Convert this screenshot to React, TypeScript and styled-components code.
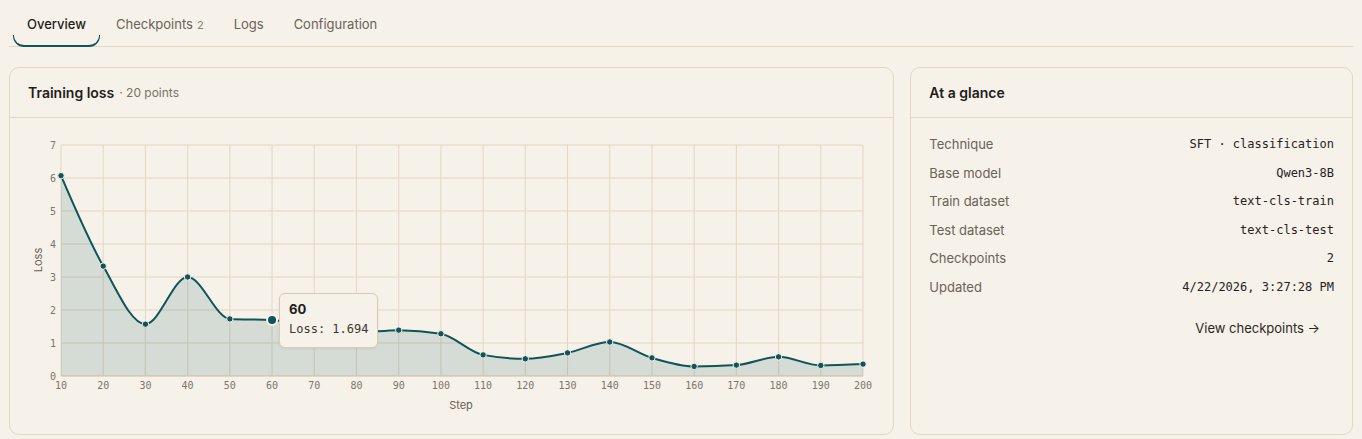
import React from "react";
import styled, { createGlobalStyle, css } from "styled-components";

const GlobalStyle = createGlobalStyle`
  html, body {
    margin: 0;
    padding: 0;
    background: #f6f1e9;
  }
  body {
    font-family: Inter, "Noto Sans", sans-serif;
    color: #1f1d1a;
    -webkit-font-smoothing: antialiased;
  }
  * { box-sizing: border-box; }
`;

const MONO = `"DejaVu Sans Mono", "Liberation Mono", monospace`;
const TEAL = "#0e5459";
const BG = "#f6f1e9";
const LINE = "#e3d7c3";

const Page = styled.div`
  padding: 0 9px;
`;

const TabBar = styled.nav`
  display: flex;
  gap: 2px;
  padding-left: 4px;
  border-bottom: 1px solid ${LINE};
`;

const Tab = styled.button<{ $active?: boolean }>`
  position: relative;
  appearance: none;
  background: none;
  border: 0;
  font-family: Inter, sans-serif;
  font-size: 13px;
  line-height: 18px;
  padding: 15px 14px 13px;
  margin-bottom: -1px;
  color: ${(p) => (p.$active ? "#1f1d1a" : "#6a6358")};
  font-weight: ${(p) => (p.$active ? 500 : 400)};
  cursor: pointer;
  display: flex;
  align-items: baseline;
  gap: 4px;

  ${(p) =>
    p.$active &&
    css`
      &::after {
        content: "";
        position: absolute;
        left: 0;
        right: 0;
        bottom: 0;
        height: 10px;
        border: 1px solid ${TEAL};
        border-top: 0;
        border-bottom-width: 2px;
        border-radius: 0 0 11px 11px;
      }
    `}
`;

const Count = styled.span`
  font-size: 11px;
  color: #8a8377;
`;

const Grid = styled.div`
  margin-top: 20px;
  display: grid;
  grid-template-columns: 2fr 1fr;
  gap: 16px;
`;

const Card = styled.section`
  border: 1px solid ${LINE};
  border-radius: 10px;
  background: ${BG};
  display: flex;
  flex-direction: column;
`;

const CardHeader = styled.header`
  height: 50px;
  padding: 0 18px;
  display: flex;
  align-items: center;
  gap: 5px;
  border-bottom: 1px solid ${LINE};
`;

const CardTitle = styled.h2`
  margin: 0;
  font-size: 14px;
  font-weight: 600;
  color: #1f1d1a;
`;

const CardMeta = styled.span`
  font-size: 12px;
  color: #7a7367;
`;

const ChartBody = styled.div`
  position: relative;
  height: 316px;
`;

const Tooltip = styled.div`
  position: absolute;
  left: 269px;
  top: 175px;
  height: 55px;
  padding: 7px 9px;
  border: 1px solid #d8cbb3;
  border-radius: 6px;
  background: ${BG};
  box-shadow: 0 1px 3px rgba(80, 60, 30, 0.08);
  display: flex;
  flex-direction: column;
  gap: 3px;
  white-space: nowrap;
`;

const TipTitle = styled.div`
  font-size: 13px;
  font-weight: 700;
  line-height: 17px;
  color: #1f1d1a;
`;

const TipValue = styled.div`
  font-family: ${MONO};
  font-size: 12px;
  line-height: 17px;
  color: #3b3833;
`;

const GlanceBody = styled.div`
  padding: 16px 18px 0;
  display: flex;
  flex-direction: column;
`;

const Facts = styled.dl`
  margin: 0;
  display: grid;
  grid-template-columns: auto 1fr;
  row-gap: 8.6px;
`;

const FactLabel = styled.dt`
  font-size: 13px;
  line-height: 20px;
  color: #6a6358;
`;

const FactValue = styled.dd`
  margin: 0;
  text-align: right;
  font-family: ${MONO};
  font-size: 12px;
  line-height: 20px;
  color: #26231f;
`;

const LinkRow = styled.div`
  display: flex;
  justify-content: flex-end;
  margin-top: 21px;
`;

const ViewLink = styled.a`
  font-size: 13px;
  line-height: 20px;
  color: #2b2824;
  padding: 0 14px;
  text-decoration: none;
  cursor: pointer;
`;

type Point = { step: number; loss: number };

const DATA: Point[] = [
  { step: 10, loss: 6.07 },
  { step: 20, loss: 3.33 },
  { step: 30, loss: 1.57 },
  { step: 40, loss: 3.0 },
  { step: 50, loss: 1.73 },
  { step: 60, loss: 1.694 },
  { step: 70, loss: 1.5 },
  { step: 80, loss: 1.32 },
  { step: 90, loss: 1.39 },
  { step: 100, loss: 1.28 },
  { step: 110, loss: 0.64 },
  { step: 120, loss: 0.52 },
  { step: 130, loss: 0.7 },
  { step: 140, loss: 1.03 },
  { step: 150, loss: 0.55 },
  { step: 160, loss: 0.29 },
  { step: 170, loss: 0.33 },
  { step: 180, loss: 0.58 },
  { step: 190, loss: 0.32 },
  { step: 200, loss: 0.36 },
];

const PLOT = { left: 51, right: 853, top: 27, bottom: 258 };
const Y_MAX = 7;

const sx = (i: number) =>
  PLOT.left + (i * (PLOT.right - PLOT.left)) / (DATA.length - 1);
const sy = (v: number) =>
  PLOT.bottom - (v / Y_MAX) * (PLOT.bottom - PLOT.top);

// Monotone cubic interpolation along x (same scheme as d3's curveMonotoneX)
function monotonePath(pts: [number, number][]): string {
  const n = pts.length;
  const sign = (x: number) => (x < 0 ? -1 : 1);
  const t: number[] = new Array(n).fill(0);
  for (let i = 1; i < n - 1; i++) {
    const h0 = pts[i][0] - pts[i - 1][0];
    const h1 = pts[i + 1][0] - pts[i][0];
    const s0 = (pts[i][1] - pts[i - 1][1]) / h0;
    const s1 = (pts[i + 1][1] - pts[i][1]) / h1;
    const p = (s0 * h1 + s1 * h0) / (h0 + h1);
    t[i] =
      (sign(s0) + sign(s1)) *
        Math.min(Math.abs(s0), Math.abs(s1), 0.5 * Math.abs(p)) || 0;
  }
  const h = pts[1][0] - pts[0][0];
  t[0] = (3 * (pts[1][1] - pts[0][1])) / h / 2 - t[1] / 2;
  const hl = pts[n - 1][0] - pts[n - 2][0];
  t[n - 1] = (3 * (pts[n - 1][1] - pts[n - 2][1])) / hl / 2 - t[n - 2] / 2;

  let d = `M${pts[0][0]},${pts[0][1]}`;
  for (let i = 0; i < n - 1; i++) {
    const [x0, y0] = pts[i];
    const [x1, y1] = pts[i + 1];
    const dx = (x1 - x0) / 3;
    d += `C${x0 + dx},${y0 + dx * t[i]},${x1 - dx},${y1 - dx * t[i + 1]},${x1},${y1}`;
  }
  return d;
}

const ACTIVE = 5;

function LossChart() {
  const pts: [number, number][] = DATA.map((d, i) => [sx(i), sy(d.loss)]);
  const line = monotonePath(pts);
  const area = `${line}L${PLOT.right},${PLOT.bottom}L${PLOT.left},${PLOT.bottom}Z`;
  const yTicks = [0, 1, 2, 3, 4, 5, 6, 7];

  return (
    <svg width="882" height="316" viewBox="0 0 882 316">
      {yTicks.map((v) => (
        <line
          key={`h${v}`}
          x1={PLOT.left}
          x2={PLOT.right}
          y1={sy(v)}
          y2={sy(v)}
          stroke={LINE}
          strokeWidth={1}
        />
      ))}
      {DATA.map((d, i) => (
        <line
          key={`v${d.step}`}
          x1={sx(i)}
          x2={sx(i)}
          y1={PLOT.top}
          y2={PLOT.bottom}
          stroke={LINE}
          strokeWidth={1}
        />
      ))}
      <path d={area} fill={TEAL} fillOpacity={0.14} />
      <line
        x1={PLOT.left}
        x2={PLOT.right}
        y1={PLOT.bottom}
        y2={PLOT.bottom}
        stroke="#d2c9b6"
        strokeWidth={1}
      />
      <path d={line} fill="none" stroke={TEAL} strokeWidth={2} />
      {pts.map(([x, y], i) =>
        i === ACTIVE ? null : (
          <circle key={i} cx={x} cy={y} r={3.2} fill={TEAL} stroke={BG} strokeWidth={1} />
        )
      )}
      <circle cx={pts[ACTIVE][0]} cy={pts[ACTIVE][1]} r={5} fill={TEAL} stroke={BG} strokeWidth={2} />

      {yTicks.map((v) => (
        <text
          key={`yl${v}`}
          x={PLOT.left - 5}
          y={sy(v) + 3.5}
          textAnchor="end"
          fontFamily={MONO}
          fontSize={10}
          fill="#7d766a"
        >
          {v}
        </text>
      ))}
      {DATA.map((d, i) => (
        <text
          key={`xl${d.step}`}
          x={sx(i)}
          y={PLOT.bottom + 13}
          textAnchor="middle"
          fontFamily={MONO}
          fontSize={10}
          fill="#7d766a"
        >
          {d.step}
        </text>
      ))}
      <text
        x={29}
        y={142}
        transform="rotate(-90 29 142)"
        textAnchor="middle"
        dominantBaseline="middle"
        fontFamily="Inter, sans-serif"
        fontSize={11}
        fill="#6a6358"
      >
        Loss
      </text>
      <text
        x={451}
        y={291}
        textAnchor="middle"
        fontFamily="Inter, sans-serif"
        fontSize={11}
        fill="#6a6358"
      >
        Step
      </text>
    </svg>
  );
}

const FACTS: [string, string][] = [
  ["Technique", "SFT · classification"],
  ["Base model", "Qwen3-8B"],
  ["Train dataset", "text-cls-train"],
  ["Test dataset", "text-cls-test"],
  ["Checkpoints", "2"],
  ["Updated", "4/22/2026, 3:27:28 PM"],
];

export default function App() {
  return (
    <>
      <GlobalStyle />
      <Page>
        <TabBar>
          <Tab $active>Overview</Tab>
          <Tab>
            Checkpoints <Count>2</Count>
          </Tab>
          <Tab>Logs</Tab>
          <Tab>Configuration</Tab>
        </TabBar>
        <Grid>
          <Card>
            <CardHeader>
              <CardTitle>Training loss</CardTitle>
              <CardMeta>· 20 points</CardMeta>
            </CardHeader>
            <ChartBody>
              <LossChart />
              <Tooltip>
                <TipTitle>60</TipTitle>
                <TipValue>Loss: 1.694</TipValue>
              </Tooltip>
            </ChartBody>
          </Card>
          <Card>
            <CardHeader>
              <CardTitle>At a glance</CardTitle>
            </CardHeader>
            <GlanceBody>
              <Facts>
                {FACTS.map(([k, v]) => (
                  <React.Fragment key={k}>
                    <FactLabel>{k}</FactLabel>
                    <FactValue>{v}</FactValue>
                  </React.Fragment>
                ))}
              </Facts>
              <LinkRow>
                <ViewLink>View checkpoints →</ViewLink>
              </LinkRow>
            </GlanceBody>
          </Card>
        </Grid>
      </Page>
    </>
  );
}
